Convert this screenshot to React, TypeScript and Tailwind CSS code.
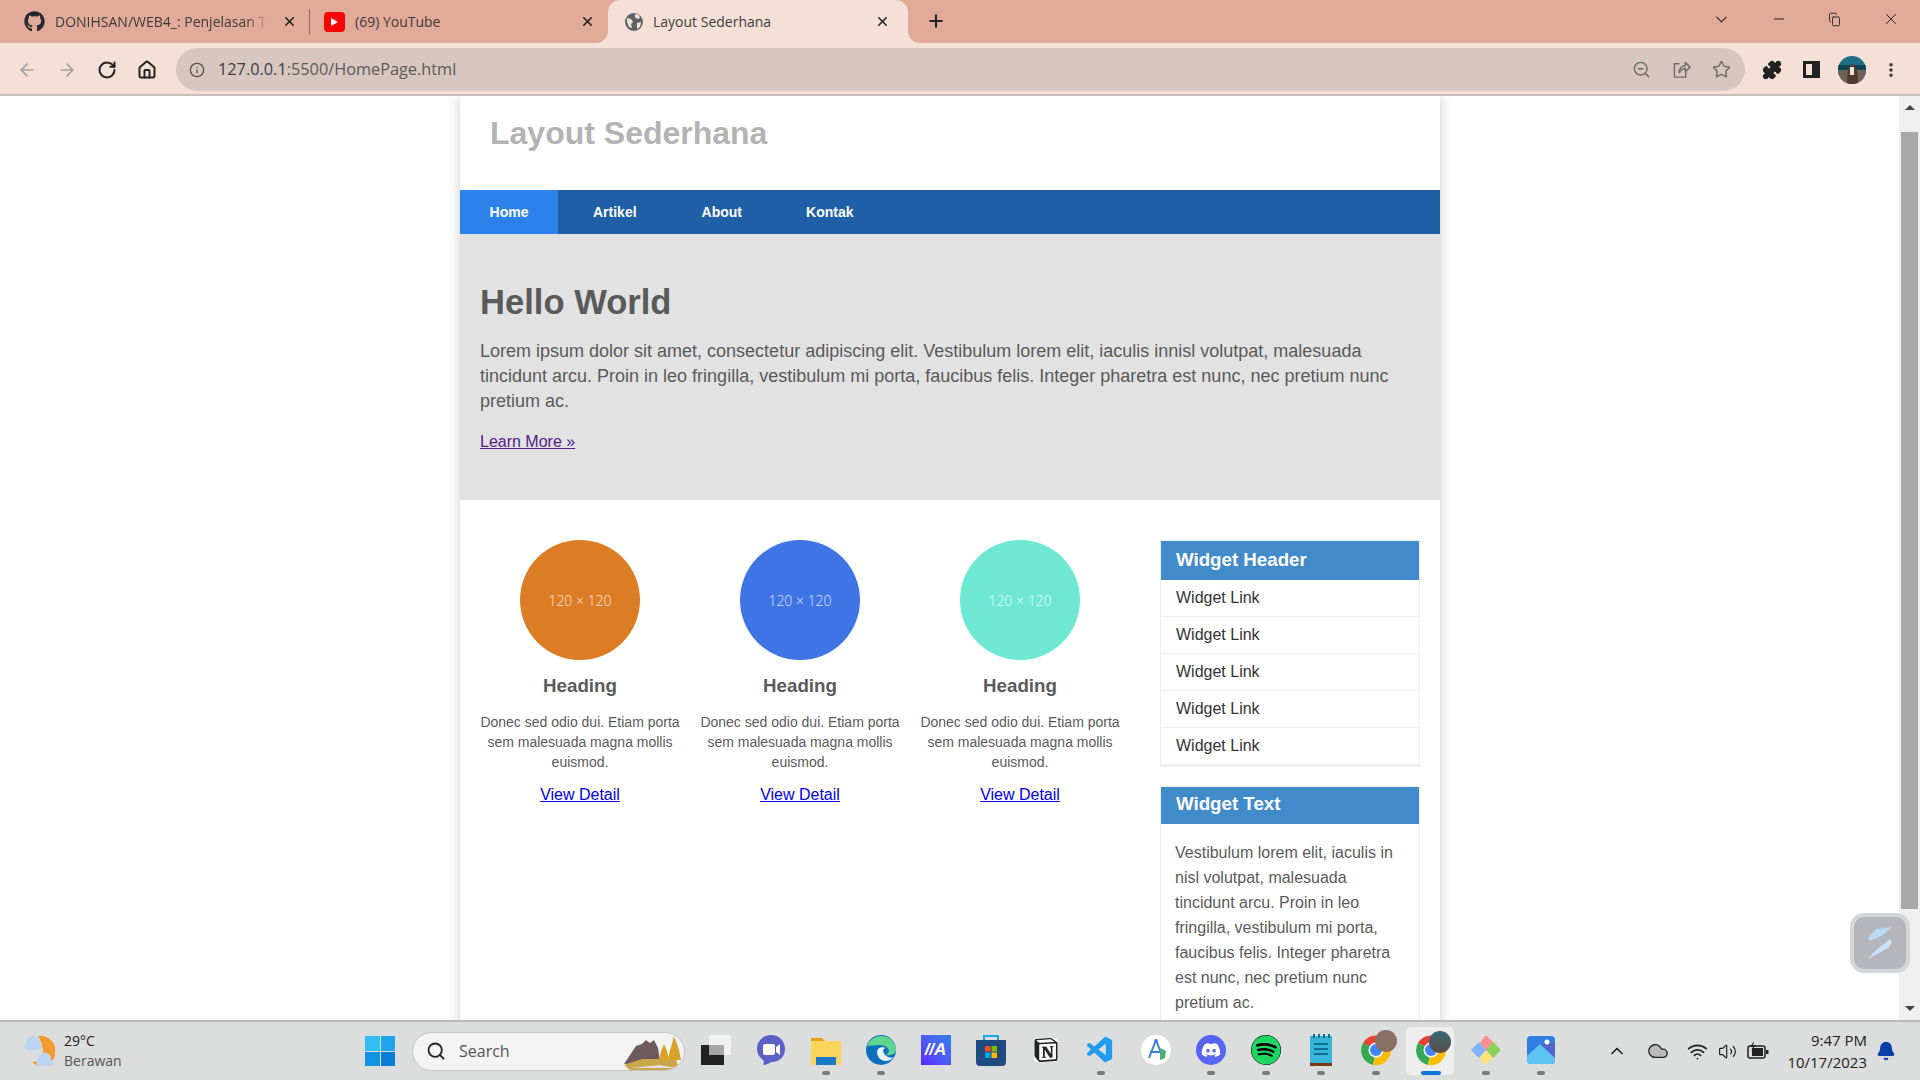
import React from 'react';
import { ArrowLeft, ArrowRight, RotateCw, Home, Info, ZoomOut, Star, Puzzle, EllipsisVertical, ChevronDown, Minus, Copy, X, Plus, Search, ChevronUp, Volume2, Wifi, Bell, Cloud } from 'lucide-react';
import { FaGithub, FaDiscord, FaSpotify } from 'react-icons/fa';
import { SiNotion } from 'react-icons/si';
import { VscVscode } from 'react-icons/vsc';

const cards = ['bg-[#dc7d26]', 'bg-[#3f74e4]', 'bg-[#6ee8d3]'];
const links = [1, 2, 3, 4, 5];

const Globe = () => (
  <svg width="20" height="20" viewBox="0 0 20 20">
    <circle cx="10" cy="10" r="9" fill="#5f6368" />
    <path d="M3 6l4 1 2 3-2 2 1 4-3-1-2-5zM11 2l4 1 1 3-3 1-2-2zM13 11l4-1-1 5-3 2z" fill="#f5e0d8" />
  </svg>
);

const Chrome = () => (
  <svg width="32" height="32" viewBox="0 0 32 32">
    <path d="M16 16L3 9a15 15 0 0 1 26 0z" fill="#ea4335" />
    <path d="M16 16L3 9a15 15 0 0 0 10 22z" fill="#34a853" />
    <path d="M16 16l13-7a15 15 0 0 1-16 22z" fill="#fbbc05" />
    <circle cx="16" cy="16" r="7.5" fill="#fff" />
    <circle cx="16" cy="16" r="6" fill="#4285f4" />
  </svg>
);

const TaskIcon = ({ children, dot, active }: { children: React.ReactNode; dot?: boolean; active?: boolean }) => (
  <div className="relative flex h-[60px] w-[55px] items-center justify-center">
    {active && <div className="absolute left-[3px] top-[6px] h-[48px] w-[48px] rounded-[5px] bg-[#eeeeee]" />}
    <div className="relative flex h-[32px] w-[32px] -translate-y-[1px] items-center justify-center">{children}</div>
    {dot && <div className="absolute bottom-[6px] h-[4px] w-[8px] rounded-full bg-[#7b7b7b]" />}
    {active && <div className="absolute bottom-[6px] h-[4px] w-[20px] rounded-full bg-[#0a74d8]" />}
  </div>
);

function TabBar() {
  return (
    <div className="flex h-[43px] bg-[#e2aa98] font-['Open_Sans',sans-serif] text-[14px] text-[#3c3c3c]">
      <div className="flex w-[309px] items-center pl-[24px]">
        <FaGithub size={21} className="text-[#26292e]" />
        <span className="ml-[10px] w-[213px] whitespace-nowrap [mask-image:linear-gradient(to_right,black_90%,transparent)]">DONIHSAN/WEB4_: Penjelasan T</span>
        <X size={15} strokeWidth={2.5} className="ml-[14px] text-[#222]" />
      </div>
      <div className="my-[9px] w-px bg-[#8e6a5c]" />
      <div className="flex w-[298px] items-center pl-[14px]">
        <div className="flex h-[20px] w-[21px] items-center justify-center rounded-[4px] bg-[#f00]">
          <div className="h-0 w-0 border-y-[4px] border-l-[7px] border-y-transparent border-l-white" />
        </div>
        <span className="ml-[10px] w-[225px]">(69) YouTube</span>
        <X size={15} strokeWidth={2.5} className="text-[#222]" />
      </div>
      <div className="relative flex h-[47px] w-[300px] items-center rounded-t-[12px] bg-[#f5e0d8] pb-[4px] pl-[16px]">
        <div className="absolute -left-[12px] bottom-[4px] h-[12px] w-[12px] bg-[radial-gradient(circle_at_0_0,#e2aa98_11.5px,#f5e0d8_12.5px)]" />
        <div className="absolute -right-[12px] bottom-[4px] h-[12px] w-[12px] bg-[radial-gradient(circle_at_100%_0,#e2aa98_11.5px,#f5e0d8_12.5px)]" />
        <Globe />
        <span className="ml-[9px] w-[222px] whitespace-nowrap">Layout Sederhana</span>
        <X size={15} strokeWidth={2.5} className="text-[#222]" />
      </div>
      <Plus size={20} strokeWidth={2.5} className="ml-[18px] mt-[11px] text-[#222]" />
      <div className="flex-1" />
      <div className="flex h-[38px] items-center gap-[40px] pr-[20px] text-[#222]">
        <ChevronDown size={19} strokeWidth={1.3} />
        <Minus size={16} strokeWidth={1.6} />
        <Copy size={15} strokeWidth={1.6} className="scale-x-[0.8]" />
        <X size={18} strokeWidth={1.3} />
      </div>
    </div>
  );
}

function Toolbar() {
  return (
    <div className="flex h-[53px] items-center border-b-2 border-[#c9beb8] bg-[#f5e0d8] pt-[2px] font-['Open_Sans',sans-serif]">
      <div className="flex w-[176px] items-center gap-[20px] pl-[17px]">
        <ArrowLeft size={20} strokeWidth={2} className="text-[#a59d9a]" />
        <ArrowRight size={20} strokeWidth={2} className="text-[#a59d9a]" />
        <RotateCw size={20} strokeWidth={2.4} className="text-[#222]" />
        <Home size={20} strokeWidth={2.4} className="text-[#222]" />
      </div>
      <div className="flex h-[43px] w-[1569px] items-center rounded-full bg-[#d7c7c0] pl-[13px] pr-[14px]">
        <Info size={16} strokeWidth={2} className="text-[#555]" />
        <span className="ml-[13px] text-[16.3px] text-[#3d4043]">
          127.0.0.1<span className="text-[#5d5a58]">:5500/HomePage.html</span>
        </span>
        <div className="flex-1" />
        <div className="flex items-center gap-[21px] text-[#6d6a68]">
          <ZoomOut size={19} strokeWidth={1.8} />
          <svg width="19" height="19" viewBox="0 0 20 20" fill="none" stroke="currentColor" strokeWidth="1.5">
            <path d="M8 4H2.5v14h12v-5" />
            <path d="M7.5 13.5c0-5 3-7.5 6.500-7.5V2.500l5 5-5 5V9c-3 0-5 1.500-6.500 4.500z" strokeLinejoin="round" />
          </svg>
          <Star size={19} strokeWidth={1.8} />
        </div>
      </div>
      <div className="flex items-center pl-[17px]">
        <Puzzle size={20} fill="#222" className="text-[#222]" />
        <div className="ml-[21px] h-[17px] w-[17px] border-[3px] border-r-[8px] border-[#222]" />
        <svg className="ml-[18px]" width="28" height="28" viewBox="0 0 28 28">
          <clipPath id="avatar">
            <circle cx="14" cy="14" r="14" />
          </clipPath>
          <g clipPath="url(#avatar)">
            <rect width="28" height="28" fill="#1d6d85" />
            <rect y="9" width="28" height="5" fill="#0d4350" />
            <rect y="14" width="28" height="14" fill="#6f6258" />
            <path d="M9 28c0-10 1-18 5-20 5 0 6 10 6 20z" fill="#54392f" />
            <rect x="12" y="11" width="4" height="8" fill="#e8e4e0" />
          </g>
        </svg>
        <EllipsisVertical size={18} strokeWidth={2.6} className="ml-[16px] text-[#333]" />
      </div>
    </div>
  );
}

function Page() {
  return (
    <div className="relative flex min-h-0 flex-1 overflow-hidden bg-white font-['Liberation_Sans',Arial,sans-serif]">
      <div className="flex flex-1 justify-center overflow-hidden pl-[1px]">
        <div className="h-fit w-[980px] bg-white shadow-[0_0_12px_rgba(0,0,0,0.2)]">
          <header className="h-[94px] pl-[30px] pt-[19px]">
            <h1 className="text-[32px] font-bold leading-[37px] text-[#b3b3b3]">Layout Sederhana</h1>
          </header>
          <nav className="flex h-[44px] bg-[#1f5fa8] text-[14px] font-bold text-white">
            <a className="flex w-[98px] items-center justify-center bg-[#2c82ea]">Home</a>
            <a className="ml-[5px] flex items-center px-[30px]">Artikel</a>
            <a className="ml-[5px] flex items-center px-[30px]">About</a>
            <a className="ml-[4px] flex items-center px-[30px]">Kontak</a>
          </nav>
          <section className="h-[266px] bg-[#e2e2e2] px-[20px] pt-[47px] text-[#5a5a5a]">
            <h2 className="text-[34.6px] font-bold leading-[42px]">Hello World</h2>
            <p className="mt-[16px] text-[18px] leading-[25px]">
              Lorem ipsum dolor sit amet, consectetur adipiscing elit. Vestibulum lorem elit, iaculis innisl volutpat, malesuada tincidunt arcu. Proin in leo fringilla, vestibulum mi porta, faucibus felis. Integer pharetra est nunc, nec pretium nunc pretium ac.
            </p>
            <a className="mt-[18px] block text-[16px] leading-[20px] text-[#551a8b] underline">Learn More »</a>
          </section>
          <section className="flex items-start pb-[20px] pl-[10px] pr-[20px] pt-[40px] text-[#5a5a5a]">
            <div className="flex w-[660px]">
              {cards.map((color, i) => (
                <div key={i} className="flex w-[220px] flex-col items-center px-[10px] text-center">
                  <div className={`flex h-[120px] w-[120px] items-center justify-center rounded-full font-['Open_Sans',sans-serif] text-[14px] font-light text-white/80 ${color}`}>
                    120 × 120
                  </div>
                  <h3 className="mt-[15px] text-[18.72px] font-bold leading-[22px]">Heading</h3>
                  <p className="mt-[15px] text-[14px] leading-[20px]">Donec sed odio dui. Etiam porta sem malesuada magna mollis euismod.</p>
                  <a className="mt-[13px] text-[16px] leading-[20px] text-[#0000ee] underline">View Detail</a>
                </div>
              ))}
            </div>
            <aside className="ml-[30px] w-[260px]">
              <div className="border border-b-[3px] border-[#eee]">
                <h3 className="h-[39px] bg-[#428bca] pl-[15px] pt-[8px] text-[18.72px] font-bold leading-[22px] text-white">Widget Header</h3>
                {links.map(n => (
                  <div key={n} className="flex h-[37px] items-center border-b border-[#eee] pl-[15px] text-[16px] text-[#333] last:h-[36px] last:border-b-0">Widget Link</div>
                ))}
              </div>
              <div className="mt-[19px] border border-[#eee]">
                <h3 className="h-[37px] bg-[#428bca] pl-[15px] pt-[6px] text-[18.72px] font-bold leading-[22px] text-white">Widget Text</h3>
                <p className="px-[14px] pb-[14px] pt-[16px] text-[16px] leading-[25px]">
                  Vestibulum lorem elit, iaculis in nisl volutpat, malesuada tincidunt arcu. Proin in leo fringilla, vestibulum mi porta, faucibus felis. Integer pharetra est nunc, nec pretium nunc pretium ac.
                </p>
              </div>
            </aside>
          </section>
        </div>
      </div>
      <div className="flex w-[21px] flex-col items-center bg-[#efefef]">
        <div className="mt-[9px] h-0 w-0 border-x-[5px] border-b-[5px] border-x-transparent border-b-[#444]" />
        <div className="mt-[22px] h-[777px] w-[17px] bg-[#a8a8a8]" />
        <div className="mt-auto mb-[9px] h-0 w-0 border-x-[5px] border-t-[5px] border-x-transparent border-t-[#444]" />
      </div>
      <div className="absolute right-[10px] top-[817px] flex h-[60px] w-[60px] items-center justify-center rounded-[14px] border-[4px] border-[#d5d6da] bg-[#b5b6bc]">
        <svg width="26" height="34" viewBox="0 0 26 34">
          <path d="M9 3L25 1 16 9 3 15 1 12z" fill="#bcd9f5" />
          <path d="M23 13l2 4-4 5L1 33l7-8z" fill="#c9e2fa" />
        </svg>
      </div>
    </div>
  );
}

function Taskbar() {
  return (
    <div className="flex h-[60px] items-center border-t-2 border-[#b9b9b9] bg-[#dcdddd] font-['Open_Sans',sans-serif] text-[#222]">
      <div className="flex w-[365px] items-center pl-[24px]">
        <svg width="31" height="40" viewBox="0 0 31 40">
          <path d="M14 5a15 15 0 0 1 5 30 15 15 0 0 1-11-4c7 0 12-5 11-12-1-6-3-11-5-14z" fill="#f29b2e" />
          <path d="M2 12a6 6 0 0 1 14 0 4 4 0 0 1 0 7H3a4 4 0 0 1-1-7zM14 28a6 6 0 0 1 13 0 4 4 0 0 1 0 7H15a4 4 0 0 1-1-7z" fill="#bcd5f3" />
        </svg>
        <div className="ml-[9px] text-[14px] leading-[20px]">
          <div>29°C</div>
          <div className="text-[#555]">Berawan</div>
        </div>
      </div>
      <div className="grid h-[30px] w-[30px] grid-cols-2 gap-[1px]">
        <div className="bg-[#34bdf3]" />
        <div className="bg-[#1fa3ec]" />
        <div className="bg-[#1292e2]" />
        <div className="bg-[#0a7dd8]" />
      </div>
      <div className="ml-[17px] mr-[3px] flex h-[39px] w-[273px] items-center overflow-hidden rounded-full border border-[#c4c4c4] bg-[#f3f3f3] pl-[13px]">
        <Search size={20} strokeWidth={2.2} className="text-[#222]" />
        <span className="ml-[13px] text-[16px] text-[#555]">Search</span>
        <svg className="ml-auto" width="62" height="38" viewBox="0 0 62 38">
          <path d="M2 32L14 14l6-2 4-4 4 3 4-3 4 8 2 14z" fill="#6d5a5e" />
          <path d="M2 33l18-6h34l2 6-8 5H8z" fill="#c9a84a" />
          <path d="M8 36l30-3 16 3z" fill="#e8dde0" />
          <path d="M42 12l3 7 2 9h-10l2-9zM52 4l3 8 2 6 2 10H46l2-10 2-6z" fill="#d9a32a" />
        </svg>
      </div>
      <TaskIcon>
        <div className="relative h-[30px] w-[30px]">
          <div className="absolute bottom-0 left-0 h-[20px] w-[23px] bg-[#222]" />
          <div className="absolute right-0 top-0 h-[20px] w-[22px] bg-white/60" />
        </div>
      </TaskIcon>
      <TaskIcon>
        <svg width="30" height="30" viewBox="0 0 30 30">
          <path d="M15 0c8 0 14 6 14 14s-6 13-13 13c-2 0-4 3-9 3 1-2 1-4 0-5-4-3-6-7-6-11C1 6 7 0 15 0z" fill="#5b5fc7" />
          <rect x="7" y="9" width="12" height="11" rx="2" fill="#fff" />
          <path d="M20 12l4-3v11l-4-3z" fill="#fff" />
        </svg>
      </TaskIcon>
      <TaskIcon dot>
        <svg width="32" height="30" viewBox="0 0 32 30">
          <path d="M1 3h11l3 3h16v24H1z" fill="#fbd55b" />
          <path d="M1 3h11l3 3H1z" fill="#e3a417" />
          <path d="M6 22h20v8H6z" fill="#1a78c9" />
        </svg>
      </TaskIcon>
      <TaskIcon dot>
        <svg width="32" height="32" viewBox="0 0 32 32">
          <circle cx="16" cy="16" r="15" fill="#0c6fbe" />
          <path d="M2 12A15 15 0 0 1 31 15c0 5-5 7-10 6 4-2 4-7-1-9-6-2-12 0-18 0z" fill="#5fd68a" />
          <path d="M12 18c0-4 5-6 9-4-4 0-4 6 2 9 3 1 5 1 6 0-3 5-16 7-17-5z" fill="#e7f4fb" />
        </svg>
      </TaskIcon>
      <TaskIcon>
        <div className="flex h-[30px] w-[30px] items-center justify-center bg-gradient-to-tr from-[#5b1dff] to-[#2f80e8] font-['Liberation_Sans',sans-serif] text-[17px] font-bold italic text-white">
          //A
        </div>
      </TaskIcon>
      <TaskIcon>
        <svg width="30" height="32" viewBox="0 0 30 32">
          <path d="M8 6V2h14v4" fill="none" stroke="#1aa3e8" strokeWidth="2" />
          <path d="M0 6h30v22a4 4 0 0 1-4 4H4a4 4 0 0 1-4-4z" fill="#1e4a80" />
          <rect x="9" y="12" width="5.500" height="5.500" fill="#f25022" />
          <rect x="15.500" y="12" width="5.500" height="5.500" fill="#7fba00" />
          <rect x="9" y="18.500" width="5.500" height="5.500" fill="#00a4ef" />
          <rect x="15.500" y="18.500" width="5.500" height="5.500" fill="#ffb900" />
        </svg>
      </TaskIcon>
      <TaskIcon>
        <SiNotion size={24} className="rounded-[4px] bg-white text-[#222]" />
      </TaskIcon>
      <TaskIcon dot>
        <VscVscode size={31} className="text-[#1f9cf0]" />
      </TaskIcon>
      <TaskIcon>
        <svg width="30" height="30" viewBox="0 0 30 30">
          <circle cx="15" cy="15" r="15" fill="#fff" />
          <path d="M15 5l-7 18M15 5l7 18M9 17h12" stroke="#3f7fe0" strokeWidth="2" fill="none" />
          <circle cx="15" cy="6" r="2" fill="#3f7fe0" />
          <path d="M19 13l6 3-1 7-5 2z" fill="#4caf72" />
        </svg>
      </TaskIcon>
      <TaskIcon dot>
        <div className="flex h-[30px] w-[30px] items-center justify-center rounded-full bg-[#5865f2]">
          <FaDiscord size={20} className="text-white" />
        </div>
      </TaskIcon>
      <TaskIcon dot>
        <FaSpotify size={30} className="rounded-full bg-black text-[#1ed760]" />
      </TaskIcon>
      <TaskIcon dot>
        <svg width="22" height="32" viewBox="0 0 22 32">
          <path d="M0 2h22v28H0z" fill="#36b5d8" />
          <path d="M0 29h22v3H0z" fill="#7a3b12" />
          <path d="M4 9h14v2H4zM4 14h14v2H4zM4 19h14v2H4z" fill="#0f6f8e" />
          <path d="M3 0h2v4H3zM8 0h2v4H8zM13 0h2v4h-2zM18 0h2v4h-2z" fill="#0f6f8e" />
        </svg>
      </TaskIcon>
      <TaskIcon dot>
        <Chrome />
        <div className="absolute -right-[5px] -top-[4px] h-[22px] w-[22px] rounded-full bg-[#8a6f63]" />
      </TaskIcon>
      <TaskIcon active>
        <Chrome />
        <div className="absolute -right-[4px] -top-[3px] h-[22px] w-[22px] rounded-full bg-gradient-to-b from-[#2b6a78] to-[#5d4a44]" />
      </TaskIcon>
      <TaskIcon dot>
        <svg width="32" height="32" viewBox="0 0 32 32">
          <path d="M16 1l9 9-9 7-7-7z" fill="#ff8f8f" />
          <path d="M9 8l7 8-7 8-8-8z" fill="#7fb3ff" />
          <path d="M23 8l8 8-8 8-7-8z" fill="#8bd05a" />
          <path d="M16 17l7 7-7 7-7-7z" fill="#ffe37a" />
        </svg>
      </TaskIcon>
      <TaskIcon dot>
        <svg width="28" height="28" viewBox="0 0 28 28">
          <rect width="28" height="28" rx="4" fill="#2f7fe0" />
          <path d="M0 20L13 8l15 14v2a4 4 0 0 1-4 4H4a4 4 0 0 1-4-4z" fill="#5ec2f2" />
          <path d="M13 8l15 14V6z" fill="#6a55c0" opacity=".6" />
          <circle cx="20" cy="6" r="2.5" fill="#fff" />
        </svg>
      </TaskIcon>
      <div className="flex flex-1 items-center pl-[39px] pr-[9px]">
        <ChevronUp size={20} strokeWidth={2} />
        <Cloud size={22} strokeWidth={1.5} fill="#bbb" className="ml-[20px]" />
        <Wifi size={21} strokeWidth={2} className="ml-[18px]" />
        <Volume2 size={19} strokeWidth={1.5} className="ml-[10px]" />
        <svg className="ml-[10px]" width="22" height="20" viewBox="0 0 22 20" fill="none">
          <rect x="1" y="5" width="17" height="12" rx="2" stroke="#222" strokeWidth="1.5" />
          <rect x="5" y="7" width="11" height="8" fill="#222" />
          <rect x="19" y="9" width="2.500" height="4" fill="#222" />
          <path d="M7 0L3 6h3l-2 4 5-6H6z" fill="#222" />
        </svg>
        <div className="ml-[14px] w-[84px] whitespace-nowrap text-right text-[15px] leading-[22px]">
          <div>9:47 PM</div>
          <div>10/17/2023</div>
        </div>
        <Bell size={20} fill="#0a3fa8" className="ml-[9px] text-[#0a3fa8]" />
      </div>
    </div>
  );
}

export default function App() {
  return (
    <div className="flex h-screen w-full flex-col overflow-hidden">
      <TabBar />
      <Toolbar />
      <Page />
      <Taskbar />
    </div>
  );
}
